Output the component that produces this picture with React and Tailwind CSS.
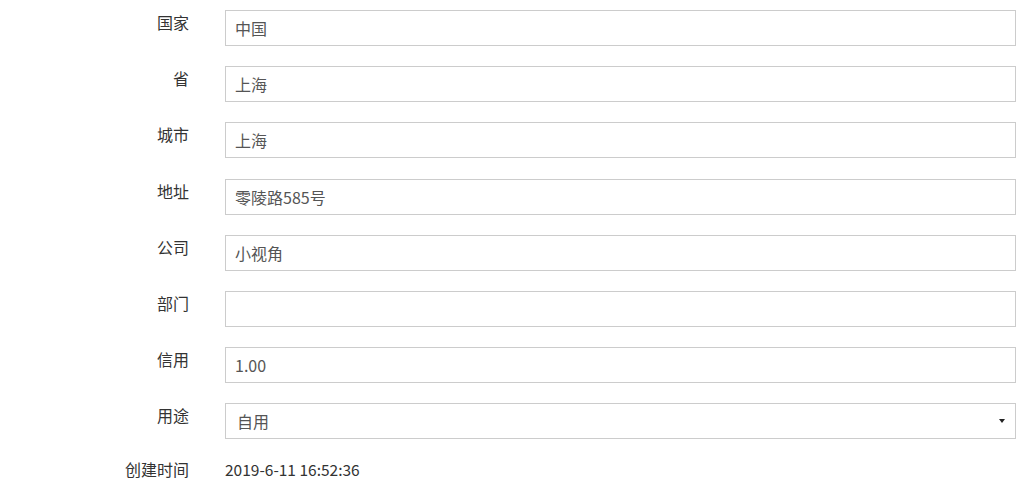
import React from 'react';

const rows = [
  { label: '国家', value: '中国' },
  { label: '省', value: '上海' },
  { label: '城市', value: '上海' },
  { label: '地址', value: '零陵路585号' },
  { label: '公司', value: '小视角' },
  { label: '部门', value: '' },
  { label: '信用', value: '1.00' },
];

export default function App() {
  return (
    <div
      className="w-[1022px] h-[490px] bg-white overflow-hidden pt-[10px] text-[16px]"
      style={{ fontFamily: '"Noto Sans CJK SC", "Noto Sans", sans-serif' }}
    >
      {rows.map((r) => (
        <div key={r.label} className="flex mb-[20.2px]">
          <label className="w-[189px] shrink-0 text-right text-[#333] pt-[2px] leading-5">{r.label}</label>
          <input
            readOnly
            value={r.value}
            className="ml-[36px] w-[791px] h-[36px] border border-[#ccc] px-[9px] text-[#555] outline-none"
          />
        </div>
      ))}
      <div className="flex mb-[20px]">
        <label className="w-[189px] shrink-0 text-right text-[#333] pt-[2px] leading-5">用途</label>
        <div className="ml-[36px] w-[791px] h-[36px] border border-[#ccc] pl-[11px] pr-[10px] flex items-center justify-between text-[#555]">
          <span>自用</span>
          <span className="w-0 h-0 border-l-[3px] border-r-[3px] border-t-[4px] border-l-transparent border-r-transparent border-t-[#222]" />
        </div>
      </div>
      <div className="flex -mt-[3px]">
        <span className="w-[189px] shrink-0 text-right text-[#333] pt-[3px] leading-5">创建时间</span>
        <span className="ml-[36px] text-[#333] text-[15.5px] pt-[3px] leading-5">2019-6-11 16:52:36</span>
      </div>
    </div>
  );
}
